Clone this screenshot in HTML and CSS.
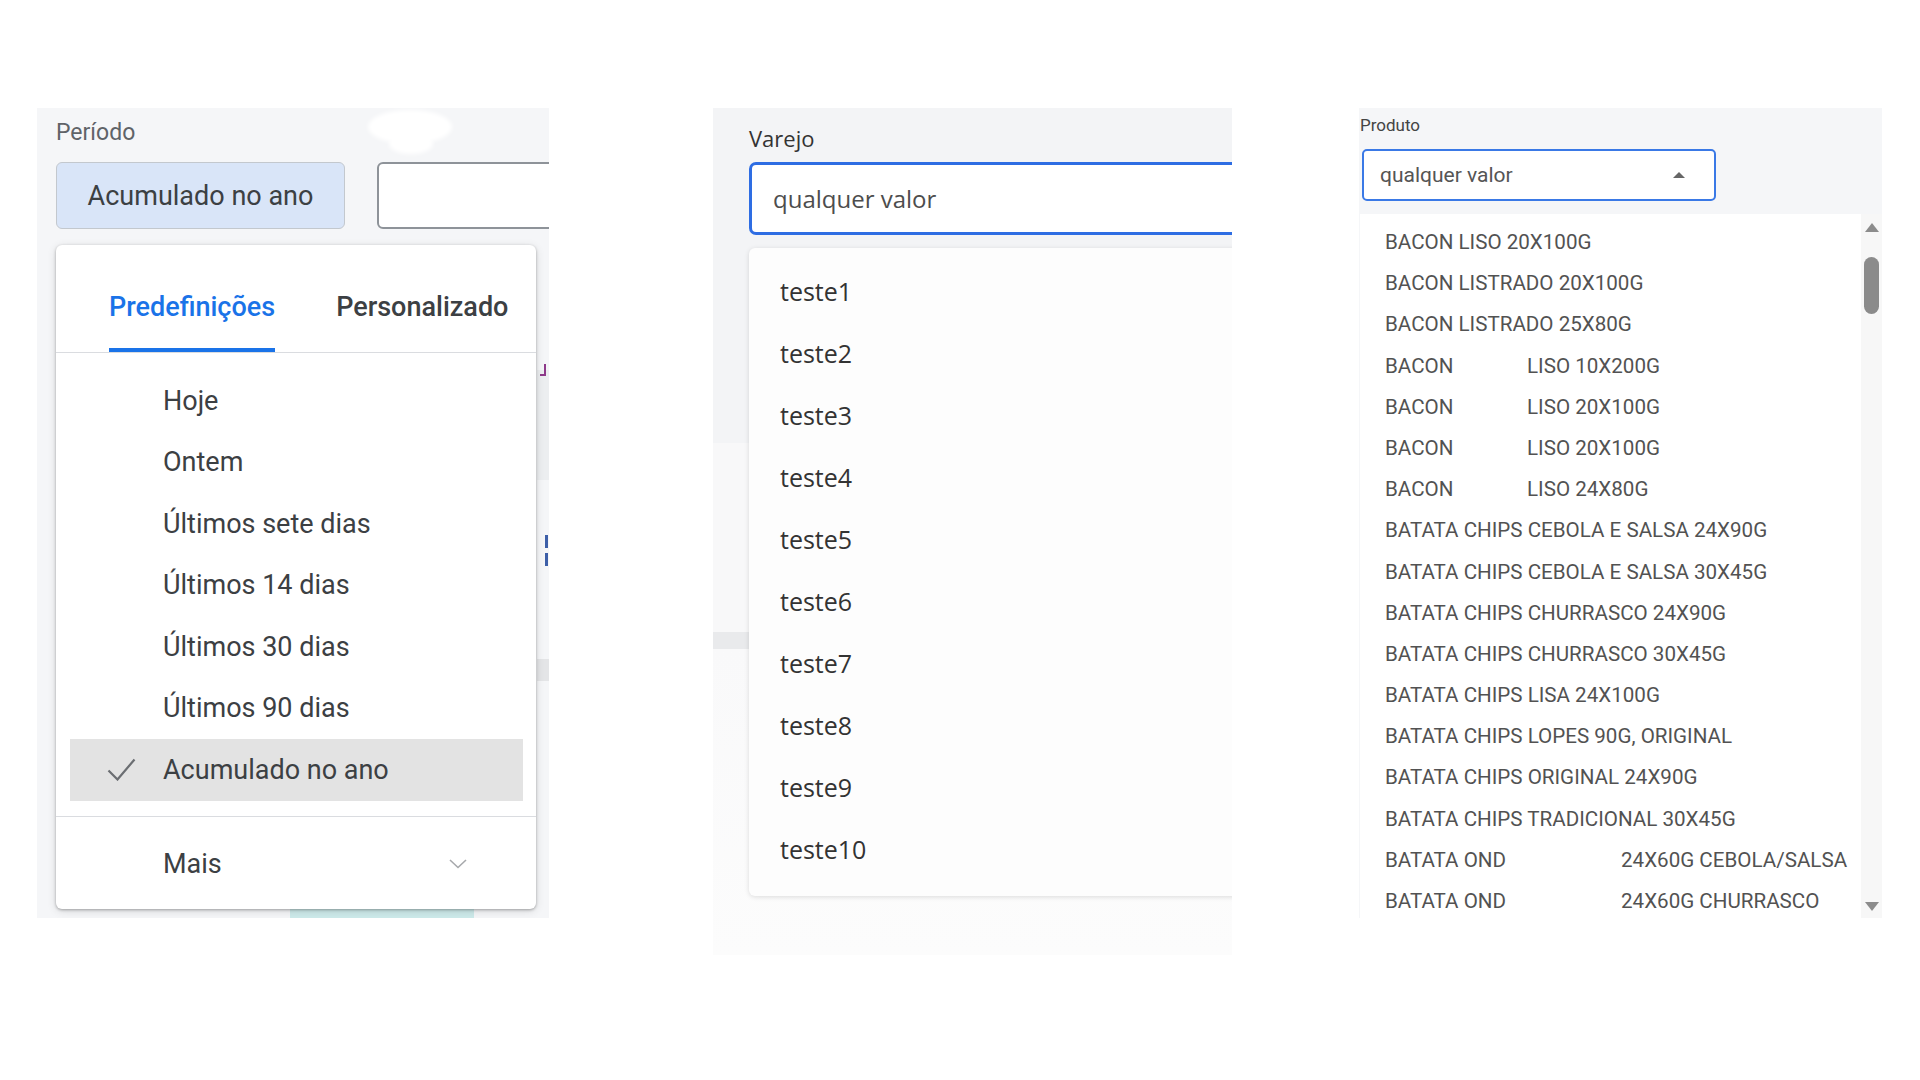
FILE: index.html
```html
<!DOCTYPE html>
<html lang="pt-BR">
<head>
    <meta charset="UTF-8">
    <meta name="viewport" content="width=device-width, initial-scale=1.0">
    <title>Filtros</title>
    <link rel="stylesheet" href="styles.css">
</head>
<body>
    <div class="board">

        <!-- seletor de período -->
        <section class="panel panel-period">
            <span class="smudge smudge-top"></span>
            <span class="smudge smudge-tail"></span>
            <span class="edge edge-gray"></span>
            <span class="edge edge-hook"></span>
            <span class="edge edge-blue"></span>
            <span class="edge edge-blue edge-blue-low"></span>
            <span class="edge edge-block"></span>
            <span class="under-strip"></span>

            <div class="field-label">Período</div>
            <div class="period-row">
                <div class="period-btn">Acumulado no ano</div>
                <div class="period-input"></div>
            </div>

            <div class="period-card">
                <div class="tabs">
                    <div class="tab active">Predefinições</div>
                    <div class="tab">Personalizado</div>
                </div>
                <ul class="presets">
                    <li class="preset"><span></span>Hoje</li>
                    <li class="preset"><span></span>Ontem</li>
                    <li class="preset"><span></span>Últimos sete dias</li>
                    <li class="preset"><span></span>Últimos 14 dias</li>
                    <li class="preset"><span></span>Últimos 30 dias</li>
                    <li class="preset"><span></span>Últimos 90 dias</li>
                    <li class="preset selected">
                        <svg class="tick" viewBox="0 0 29 23"><path d="M1.5 12.5l9 9L27.5 1.5" fill="none" stroke="#6b6e72" stroke-width="2.2"/></svg>
                        Acumulado no ano
                    </li>
                </ul>
                <div class="more">
                    <span>Mais</span>
                    <svg class="chevron" viewBox="0 0 18 10"><path d="M1 1l8 7.5L17 1" fill="none" stroke="#a7a9ac" stroke-width="1.6"/></svg>
                </div>
            </div>
        </section>

        <!-- varejo -->
        <section class="panel panel-retail">
            <div class="retail-label">Varejo</div>
            <div class="retail-input">qualquer valor</div>
            <ul class="retail-card">
                <li>teste1</li>
                <li>teste2</li>
                <li>teste3</li>
                <li>teste4</li>
                <li>teste5</li>
                <li>teste6</li>
                <li>teste7</li>
                <li>teste8</li>
                <li>teste9</li>
                <li>teste10</li>
            </ul>
        </section>

        <!-- produto -->
        <section class="panel panel-product">
            <div class="product-label">Produto</div>
            <div class="product-input">
                <span>qualquer valor</span>
                <svg class="caret" viewBox="0 0 12 6"><path d="M0 6L6 0l6 6z" fill="#666"/></svg>
            </div>
            <div class="product-list">
                <ul class="product-options">
                    <li>BACON LISO 20X100G</li>
                    <li>BACON LISTRADO 20X100G</li>
                    <li>BACON LISTRADO 25X80G</li>
                    <li><span class="gap-short">BACON</span>LISO 10X200G</li>
                    <li><span class="gap-short">BACON</span>LISO 20X100G</li>
                    <li><span class="gap-short">BACON</span>LISO 20X100G</li>
                    <li><span class="gap-short">BACON</span>LISO 24X80G</li>
                    <li>BATATA CHIPS CEBOLA E SALSA 24X90G</li>
                    <li>BATATA CHIPS CEBOLA E SALSA 30X45G</li>
                    <li>BATATA CHIPS CHURRASCO 24X90G</li>
                    <li>BATATA CHIPS CHURRASCO 30X45G</li>
                    <li>BATATA CHIPS LISA 24X100G</li>
                    <li>BATATA CHIPS LOPES 90G, ORIGINAL</li>
                    <li>BATATA CHIPS ORIGINAL 24X90G</li>
                    <li>BATATA CHIPS TRADICIONAL 30X45G</li>
                    <li><span class="gap-long">BATATA OND</span>24X60G CEBOLA/SALSA</li>
                    <li><span class="gap-long">BATATA OND</span>24X60G CHURRASCO</li>
                </ul>
                <div class="scrollbar">
                    <svg class="scroll-arrow" viewBox="0 0 14 9"><path d="M0 9L7 0l7 9z" fill="#8c8c8c"/></svg>
                    <span class="scroll-thumb"></span>
                    <svg class="scroll-arrow scroll-down" viewBox="0 0 14 9"><path d="M0 0l7 9 7-9z" fill="#8c8c8c"/></svg>
                </div>
            </div>
        </section>

    </div>
</body>
</html>
```

FILE: styles.css
```css
* {
    box-sizing: border-box;
}

body {
    margin: 0;
    background: #fff;
    font-family: Roboto, "Liberation Sans", sans-serif;
}

.board {
    display: flex;
    align-items: flex-start;
    padding-top: 108px;
}

.panel {
    position: relative;
    overflow: hidden;
    flex-shrink: 0;
}

/* ---- período ---- */
.panel-period {
    margin-left: 37px;
    width: 512px;
    height: 810px;
    background: #f5f6f8;
    padding: 12px 0 0 19px;
}

.field-label {
    font-size: 23px;
    line-height: 26px;
    color: #5f6368;
}

.period-row {
    display: flex;
    gap: 32px;
    margin-top: 16px;
}

.period-btn {
    flex-shrink: 0;
    width: 289px;
    height: 67px;
    border: 1.5px solid #c3c8ce;
    border-radius: 6px;
    background: #d9e5f8;
    color: #3c4043;
    font-size: 27px;
    display: flex;
    align-items: center;
    justify-content: center;
}

.period-input {
    flex-shrink: 0;
    width: 220px;
    height: 67px;
    border: 2px solid #8e9399;
    border-radius: 6px;
    background: #fff;
}

.period-card {
    position: relative;
    z-index: 1;
    margin-top: 16px;
    width: 480px;
    height: 664px;
    background: #fff;
    border-radius: 6px;
    box-shadow: 0 1px 3px rgba(0, 0, 0, .3), 0 2px 10px rgba(0, 0, 0, .12);
    display: flex;
    flex-direction: column;
}

.tabs {
    height: 108px;
    flex-shrink: 0;
    border-bottom: 1px solid #dadce0;
    display: flex;
    align-items: flex-end;
    padding-left: 53px;
    gap: 61px;
}

.tab {
    font-size: 27px;
    font-weight: 500;
    line-height: 32px;
    color: #3c4043;
    padding-bottom: 25px;
    border-bottom: 4px solid transparent;
}

.tab.active {
    color: #1a73e8;
    border-bottom-color: #1a73e8;
}

.presets {
    list-style: none;
    margin: 0;
    padding: 17px 13px 15px 14px;
    border-bottom: 1px solid #dadce0;
}

.preset {
    height: 61.5px;
    display: grid;
    grid-template-columns: 93px 1fr;
    align-items: center;
    font-size: 27px;
    color: #3c4043;
}

.preset.selected {
    background: #e3e3e3;
}

.tick {
    margin-left: 37px;
    width: 29px;
    height: 23px;
}

.more {
    flex: 1;
    display: flex;
    align-items: center;
    justify-content: space-between;
    padding: 2px 69px 0 107px;
    font-size: 27px;
    color: #3c4043;
}

.chevron {
    width: 18px;
    height: 10px;
}

/* restos do fundo em volta do popup */
.smudge {
    position: absolute;
    background: #fff;
    border-radius: 50%;
    filter: blur(2px);
}

.smudge-top {
    left: 331px;
    top: 2px;
    width: 84px;
    height: 34px;
}

.smudge-tail {
    left: 352px;
    top: 26px;
    width: 44px;
    height: 20px;
}

.edge {
    position: absolute;
}

.edge-gray {
    left: 500px;
    top: 262px;
    width: 12px;
    height: 110px;
    background: #eceef0;
}

.edge-hook {
    left: 503px;
    top: 256px;
    width: 6px;
    height: 12px;
    border-right: 2px solid #8e3a8a;
    border-bottom: 2px solid #8e3a8a;
}

.edge-blue {
    left: 508px;
    top: 427px;
    width: 3px;
    height: 13px;
    background: #3d5fa8;
}

.edge-blue-low {
    top: 445px;
}

.edge-block {
    left: 500px;
    top: 551px;
    width: 12px;
    height: 22px;
    background: #e4e5e7;
}

.under-strip {
    position: absolute;
    left: 253px;
    top: 798px;
    width: 184px;
    height: 12px;
    background: #cdeaea;
}

/* ---- varejo ---- */
.panel-retail {
    margin-left: 164px;
    width: 519px;
    height: 847px;
    padding: 16px 0 0 36px;
    font-family: "Open Sans", "Noto Sans", sans-serif;
    background: linear-gradient(#f3f4f6 0, #f3f4f6 335px, #f8f8f9 335px, #f8f8f9 524px,
        #e9eaec 524px, #e9eaec 541px, #f9f9fa 541px, #fcfcfc 100%);
}

.retail-label {
    font-size: 22px;
    line-height: 28px;
    color: #333;
}

.retail-input {
    margin-top: 10px;
    width: 540px;
    height: 73px;
    border: 3px solid #2e6de3;
    border-radius: 7px;
    background: #fff;
    display: flex;
    align-items: center;
    padding-left: 21px;
    font-size: 24px;
    color: #4d4d4d;
}

.retail-card {
    list-style: none;
    margin: 13px 0 0;
    width: 540px;
    height: 648px;
    padding: 12px 0 0 31px;
    background: #fdfdfd;
    border-radius: 6px;
    box-shadow: 0 1px 5px rgba(0, 0, 0, .13);
}

.retail-card li {
    height: 62px;
    display: flex;
    align-items: center;
    font-size: 25px;
    color: #333;
}

/* ---- produto ---- */
.panel-product {
    margin-left: 127px;
    width: 523px;
    height: 810px;
    background: #f5f6f8;
    padding: 7px 0 0 1px;
}

.product-label {
    font-size: 17px;
    line-height: 20px;
    color: #444;
}

.product-input {
    margin: 14px 0 0 2px;
    width: 354px;
    height: 52px;
    border: 2px solid #3a79e6;
    border-radius: 5px;
    background: #fff;
    display: flex;
    align-items: center;
    justify-content: space-between;
    padding: 0 29px 0 16px;
    font-size: 21px;
    color: #555;
}

.caret {
    width: 12px;
    height: 6px;
}

.product-list {
    margin-top: 13px;
    height: 704px;
    display: flex;
    background: #fff;
}

.product-options {
    flex: 1;
    list-style: none;
    margin: 0;
    padding: 8px 0 0 25px;
    overflow: hidden;
}

.product-options li {
    height: 41.2px;
    line-height: 41.2px;
    font-size: 20.6px;
    color: #525252;
    white-space: nowrap;
}

.gap-short {
    display: inline-block;
    width: 142px;
}

.gap-long {
    display: inline-block;
    width: 236px;
}

.scrollbar {
    width: 21px;
    background: #f7f7f7;
    display: flex;
    flex-direction: column;
    align-items: center;
    padding: 9px 0 7px;
}

.scroll-arrow {
    width: 14px;
    height: 9px;
}

.scroll-thumb {
    margin-top: 25px;
    width: 15px;
    height: 57px;
    border-radius: 8px;
    background: #8b8b8b;
}

.scroll-down {
    margin-top: auto;
}
```
